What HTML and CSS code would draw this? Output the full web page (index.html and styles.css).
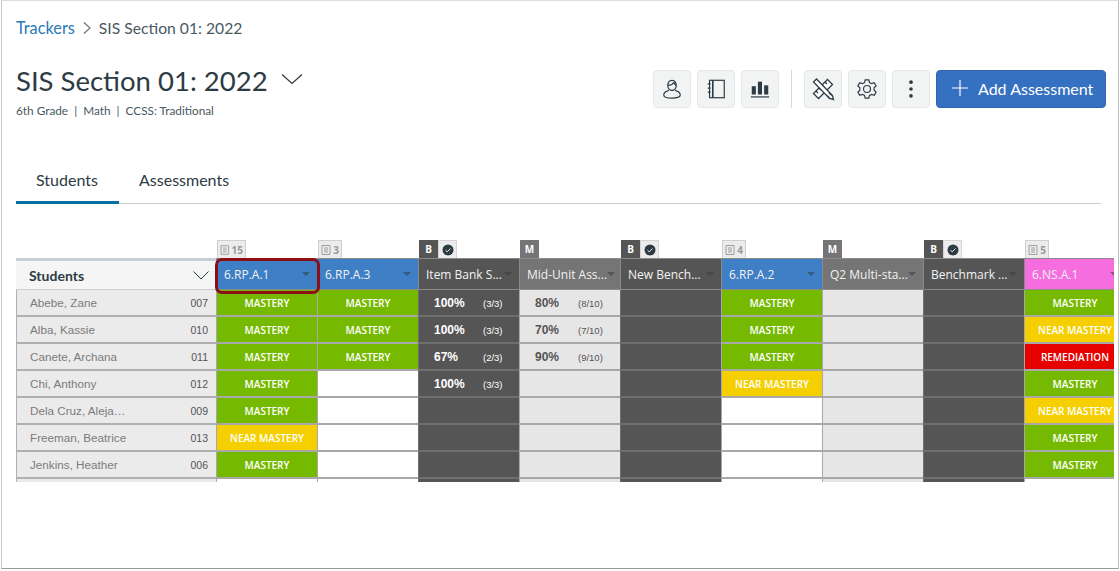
FILE: index.html
```
<!DOCTYPE html>
<html lang="en">
<head>
<meta charset="utf-8">
<title>SIS Section 01: 2022</title>
<link rel="stylesheet" href="styles.css">
</head>
<body>
<main class="frame">
  <nav class="crumbs">
    <a class="crumb-link" href="#">Trackers</a>
    <svg class="crumb-sep" viewBox="0 0 10 14" width="10" height="14"><path d="M2 1.5 8 7l-6 5.5" fill="none" stroke="#6b7780" stroke-width="1.2"/></svg>
    <span>SIS Section 01: 2022</span>
  </nav>
  <header class="head">
    <div class="head-text">
      <div class="title-row">
        <h1 class="title">SIS Section 01: 2022</h1>
        <svg class="title-caret" viewBox="0 0 22 12" width="22" height="12"><path d="M1 1.5 11 10.5 21 1.5" fill="none" stroke="#2d3b45" stroke-width="1.3"/></svg>
      </div>
      <p class="sub">6th Grade &nbsp;|&nbsp; Math &nbsp;|&nbsp; CCSS: Traditional</p>
    </div>
    <div class="tools">
      <button class="tool"><svg viewBox="0 0 24 24" width="22" height="22" fill="none" stroke="#2d3b45" stroke-width="1.3"><path d="M7.5 9.5C7 4.5 9 2.5 12 2.5s5 2 4.5 7c-.5 2.5-2 4-4.5 4s-4-1.500-4.500-4Z"/><path d="M7.500 8c3 0 5-1 6.500-3 .7 1.500 1.500 2.500 2.500 3"/><path d="M8.500 13.500C5 14.500 3 16.500 3 18.500c0 2.500 4 3.500 9 3.500s9-1 9-3.500c0-2-2-4-5.500-5"/></svg></button>
      <button class="tool"><svg viewBox="0 0 24 24" width="22" height="22" fill="none" stroke="#2d3b45" stroke-width="1.3"><rect x="5" y="2.500" width="16" height="19"/><path d="M8.500 2.500v19" stroke-width="1.800"/><path d="M3 6.500h3M3 11h3M3 15.500h3"/></svg></button>
      <button class="tool"><svg viewBox="0 0 24 24" width="22" height="22" fill="#2d3b45"><rect x="3" y="9" width="4.500" height="9"/><rect x="9.700" y="4" width="4.500" height="14"/><rect x="16.500" y="8" width="4.500" height="10"/><rect x="2" y="20" width="20" height="1.300"/></svg></button>
      <span class="tool-div"></span>
      <button class="tool"><svg viewBox="0 0 24 24" width="24" height="24" fill="none" stroke="#2d3b45" stroke-width="1.300"><path d="M16.500 2.500 21.500 7.500 7.500 21.500 2.500 16.500Z" fill="#fff"/><path d="M14 5l2 2M11 8l2 2M8 11l2 2M5 14l2 2"/><path d="M5.500 2 2.500 5l16 16.500 4 1-1-4Z" fill="#fff"/><path d="M16.500 18.500 18.500 21.500M18 16l3 2.500"/></svg></button>
      <button class="tool"><svg viewBox="0 0 24 24" width="22" height="22" fill="none" stroke="#2d3b45" stroke-width="1.300"><circle cx="12" cy="12" r="3.800"/><path d="M10 2h4l.7 3 2.300 1.200 2.900-1 2 3.500-2.200 2 .1 2.700 2.100 2-2 3.500-2.900-1L14.700 19l-.7 3h-4l-.7-3-2.300-1.200-2.900 1-2-3.500 2.200-2-.1-2.700L2 8.700l2-3.500 2.900 1L9.300 5Z"/></svg></button>
      <button class="tool"><svg viewBox="0 0 24 24" width="22" height="22" fill="#2d3b45"><circle cx="12" cy="4.500" r="2"/><circle cx="12" cy="12" r="2"/><circle cx="12" cy="19.500" r="2"/></svg></button>
      <button class="add"><svg viewBox="0 0 18 18" width="18" height="18"><path d="M9 1v16M1 9h16" stroke="#fff" stroke-width="1.200"/></svg><span>Add Assessment</span></button>
    </div>
  </header>
  <div class="tabs">
    <a class="tab tab-on">Students</a>
    <a class="tab">Assessments</a>
  </div>
  <section class="board">
    <div class="grid">
      <div class="tag-corner"></div>
      <div class="tags"><span class="tag tag-std"><svg class="doc" viewBox="0 0 10 10" width="10" height="10"><path d="M1 .5h8v9H1ZM3 3h4M3 5h4M3 7h4" fill="none" stroke="#999" stroke-width=".9"/></svg>15</span></div>
      <div class="tags"><span class="tag tag-std tag-one"><svg class="doc" viewBox="0 0 10 10" width="10" height="10"><path d="M1 .5h8v9H1ZM3 3h4M3 5h4M3 7h4" fill="none" stroke="#999" stroke-width=".9"/></svg>3</span></div>
      <div class="tags"><span class="tag tag-b">B</span><span class="tag tag-check"><svg viewBox="0 0 12 12" width="12" height="12"><circle cx="6" cy="6" r="5.500" fill="#2d3b45"/><path d="M3.500 6.200 5.200 7.800 8.500 4.500" fill="none" stroke="#fff" stroke-width=".9"/></svg></span></div>
      <div class="tags"><span class="tag tag-m">M</span></div>
      <div class="tags"><span class="tag tag-b">B</span><span class="tag tag-check"><svg viewBox="0 0 12 12" width="12" height="12"><circle cx="6" cy="6" r="5.500" fill="#2d3b45"/><path d="M3.500 6.200 5.200 7.800 8.500 4.500" fill="none" stroke="#fff" stroke-width=".9"/></svg></span></div>
      <div class="tags"><span class="tag tag-std tag-one"><svg class="doc" viewBox="0 0 10 10" width="10" height="10"><path d="M1 .5h8v9H1ZM3 3h4M3 5h4M3 7h4" fill="none" stroke="#999" stroke-width=".9"/></svg>4</span></div>
      <div class="tags"><span class="tag tag-m">M</span></div>
      <div class="tags"><span class="tag tag-b">B</span><span class="tag tag-check"><svg viewBox="0 0 12 12" width="12" height="12"><circle cx="6" cy="6" r="5.500" fill="#2d3b45"/><path d="M3.500 6.200 5.200 7.800 8.500 4.500" fill="none" stroke="#fff" stroke-width=".9"/></svg></span></div>
      <div class="tags"><span class="tag tag-std tag-one"><svg class="doc" viewBox="0 0 10 10" width="10" height="10"><path d="M1 .5h8v9H1ZM3 3h4M3 5h4M3 7h4" fill="none" stroke="#999" stroke-width=".9"/></svg>5</span></div>

      <div class="corner"><span>Students</span><svg viewBox="0 0 16 9" width="16" height="9"><path d="M.5 .5 8 8 15.500 .5" fill="none" stroke="#2d3b45" stroke-width="1"/></svg></div>
      <div class="hd hd-blue hd-focus"><span class="hd-t">6.RP.A.1</span><i class="arrow"></i><b class="focus"></b></div>
      <div class="hd hd-blue"><span class="hd-t">6.RP.A.3</span><i class="arrow"></i></div>
      <div class="hd hd-dark"><span class="hd-t">Item Bank S...</span><i class="arrow"></i></div>
      <div class="hd hd-mid"><span class="hd-t">Mid-Unit Ass...</span><i class="arrow"></i></div>
      <div class="hd hd-dark"><span class="hd-t">New Bench...</span><i class="arrow"></i></div>
      <div class="hd hd-blue"><span class="hd-t">6.RP.A.2</span><i class="arrow"></i></div>
      <div class="hd hd-mid"><span class="hd-t">Q2 Multi-sta...</span><i class="arrow"></i></div>
      <div class="hd hd-dark"><span class="hd-t">Benchmark ...</span><i class="arrow"></i></div>
      <div class="hd hd-pink"><span class="hd-t">6.NS.A.1</span><i class="arrow"></i></div>

      <div class="name"><span>Abebe, Zane</span><em>007</em></div>
      <div class="c m">MASTERY</div><div class="c m">MASTERY</div>
      <div class="c dk score"><strong>100%</strong><small>(3/3)</small></div>
      <div class="c lt score"><strong>80%</strong><small>(8/10)</small></div>
      <div class="c dk"></div><div class="c m">MASTERY</div><div class="c lt"></div><div class="c dk"></div><div class="c m">MASTERY</div>

      <div class="name"><span>Alba, Kassie</span><em>010</em></div>
      <div class="c m">MASTERY</div><div class="c m">MASTERY</div>
      <div class="c dk score"><strong>100%</strong><small>(3/3)</small></div>
      <div class="c lt score"><strong>70%</strong><small>(7/10)</small></div>
      <div class="c dk"></div><div class="c m">MASTERY</div><div class="c lt"></div><div class="c dk"></div><div class="c nm">NEAR MASTERY</div>

      <div class="name"><span>Canete, Archana</span><em>011</em></div>
      <div class="c m">MASTERY</div><div class="c m">MASTERY</div>
      <div class="c dk score"><strong>67%</strong><small>(2/3)</small></div>
      <div class="c lt score"><strong>90%</strong><small>(9/10)</small></div>
      <div class="c dk"></div><div class="c m">MASTERY</div><div class="c lt"></div><div class="c dk"></div><div class="c r">REMEDIATION</div>

      <div class="name"><span>Chi, Anthony</span><em>012</em></div>
      <div class="c m">MASTERY</div><div class="c"></div>
      <div class="c dk score"><strong>100%</strong><small>(3/3)</small></div>
      <div class="c lt"></div>
      <div class="c dk"></div><div class="c nm">NEAR MASTERY</div><div class="c lt"></div><div class="c dk"></div><div class="c m">MASTERY</div>

      <div class="name"><span>Dela Cruz, Aleja…</span><em>009</em></div>
      <div class="c m">MASTERY</div><div class="c"></div>
      <div class="c dk"></div><div class="c lt"></div>
      <div class="c dk"></div><div class="c"></div><div class="c lt"></div><div class="c dk"></div><div class="c nm">NEAR MASTERY</div>

      <div class="name"><span>Freeman, Beatrice</span><em>013</em></div>
      <div class="c nm">NEAR MASTERY</div><div class="c"></div>
      <div class="c dk"></div><div class="c lt"></div>
      <div class="c dk"></div><div class="c"></div><div class="c lt"></div><div class="c dk"></div><div class="c m">MASTERY</div>

      <div class="name"><span>Jenkins, Heather</span><em>006</em></div>
      <div class="c m">MASTERY</div><div class="c"></div>
      <div class="c dk"></div><div class="c lt"></div>
      <div class="c dk"></div><div class="c"></div><div class="c lt"></div><div class="c dk"></div><div class="c m">MASTERY</div>

      <div class="name"></div>
      <div class="c"></div><div class="c"></div>
      <div class="c dk"></div><div class="c lt"></div>
      <div class="c dk"></div><div class="c"></div><div class="c lt"></div><div class="c dk"></div><div class="c"></div>
    </div>
  </section>
</main>
</body>
</html>
```
FILE: styles.css
```
* { box-sizing: border-box; }
html, body { margin: 0; padding: 0; background: #fff; }
body { width: 1120px; height: 571px; overflow: hidden; font-family: Lato, "Liberation Sans", sans-serif; color: #2d3b45; }

.frame {
  width: 1118px;
  height: 569px;
  margin-left: 1px;
  padding: 0 0 0 14px;
  background: #fff;
  border: 1px solid #c9c9c9;
  border-top-color: #dedede;
  border-bottom-color: #9a9a9a;
  border-right-color: #bdbdbd;
}

.crumbs { display: flex; align-items: center; gap: 7px; height: 55px; padding-bottom: 2px; font-size: 15.700px; color: #4a5862; }
.crumb-link { color: #2a7ab8; text-decoration: none; font-size: 16.300px; }

.head { display: flex; justify-content: space-between; align-items: flex-start; height: 92px; padding-right: 12px; }
.title-row { display: flex; align-items: center; gap: 13px; height: 50px; }
.title { margin: 0; font-size: 27.500px; font-weight: 400; line-height: 50px; color: #2d3b45; }
.title-caret { margin-top: -5px; }
.sub { margin: 0; font-size: 11.800px; line-height: 16px; color: #4a5862; margin-top: -3px; }

.tools { display: flex; align-items: center; gap: 6px; margin-top: 14px; }
.tool { width: 38px; height: 38px; padding: 0; display: flex; align-items: center; justify-content: center; background: #f2f4f4; border: 1px solid #e4e7e8; border-radius: 4px; }
.tool-div { width: 1px; height: 38px; background: #d5d9db; margin: 0 6px 0 6px; }
.add { width: 170px; height: 38px; display: flex; align-items: center; gap: 9px; padding: 0 0 2px 14px; background: #3671c1; color: #fff; border: 1px solid #2f66b0; border-radius: 4px; font-family: Lato, sans-serif; font-size: 16px; }

.tabs { display: flex; width: 1085px; height: 56px; border-bottom: 1px solid #c7cdd1; }
.tab { height: 56px; padding: 0 20px; line-height: 64px; font-size: 16px; color: #2d3b45; }
.tab-on { width: 103px; border-bottom: 3px solid #0770a3; }

.board { width: 1098px; height: 243px; margin-top: 35px; overflow: hidden; }
.grid { display: grid; grid-template-columns: 200px repeat(9, 101px); grid-template-rows: 19px 32px repeat(8, 27px); width: 1109px; }

.tag-corner { grid-column: 1; }
.tags { display: flex; align-items: flex-end; padding-left: 1px; }
.tag { display: flex; align-items: center; justify-content: center; height: 18px; font-family: "Open Sans", sans-serif; font-size: 10px; font-weight: 700; }
.tag-std { width: 29px; gap: 2px; background: #ececec; border: 1px solid #cfcfcf; border-bottom: 0; color: #999; padding: 0 2px; }
.tag-one { width: 24px; }
.tag-b { width: 19px; background: #555; color: #fff; }
.tag-m { width: 19px; background: #757575; color: #fff; }
.tag-check { width: 19px; background: #ececec; border: 1px solid #d5d5d5; border-bottom: 0; }

.corner { display: flex; align-items: center; justify-content: space-between; padding: 1px 7px 0 13px; background: #f5f5f5; border-top: 3px solid #c8ced3; border-bottom: 1px solid #c8ced3; font-size: 14px; font-weight: 700; color: #2d3b45; }

.hd { position: relative; display: flex; align-items: center; justify-content: space-between; padding: 1px 7px 0 7px; border-left: 1px solid #8a8a8a; border-top: 1px solid #8a8a8a; border-bottom: 1px solid #8a8a8a; font-family: "Open Sans", sans-serif; font-size: 12px; color: #f2f2f2; white-space: nowrap; }
.hd-blue { background: #3f7fc6; }
.hd-dark { background: #555; }
.hd-mid { background: #757575; }
.hd-pink { background: #f56ddf; }
.arrow { width: 0; height: 0; margin-bottom: 2px; border-left: 4px solid transparent; border-right: 4px solid transparent; border-top: 4px solid rgba(50, 60, 70, .55); }
.focus { position: absolute; left: -2px; top: -1px; width: 105px; height: 36px; border: 3px solid #8b0f14; border-radius: 7px; z-index: 2; }

.name { display: flex; align-items: center; justify-content: space-between; padding: 0 8px 0 13px; background: #ebebeb; border-left: 1px solid #b0b0b0; border-bottom: 2px solid #b0b0b0; font-family: "Liberation Sans", sans-serif; font-size: 11.700px; color: #7b7b7b; }
.name em { font-style: normal; font-size: 10.500px; color: #555; }

.c { display: flex; align-items: center; justify-content: center; background: #fff; border-left: 1px solid #a8a8a8; border-bottom: 2px solid #a8a8a8; font-family: "Open Sans", sans-serif; font-size: 10px; font-weight: 600; color: #fff; white-space: nowrap; padding-top: 1px; }
.m { background: #75b900; }
.nm { background: #f5cf00; }
.r { background: #e60000; }
.dk { background: #555; border-color: #6f6f6f; }
.lt { background: #e6e6e6; border-color: #a8a8a8; }
.score { justify-content: flex-start; font-family: "Liberation Sans", sans-serif; padding-left: 15px; }
.score strong { width: 49px; font-size: 12px; font-weight: 700; }
.score small { font-size: 9.500px; font-weight: 400; }
.lt.score { color: #555; }
.lt.score strong { width: 43px; }
```
